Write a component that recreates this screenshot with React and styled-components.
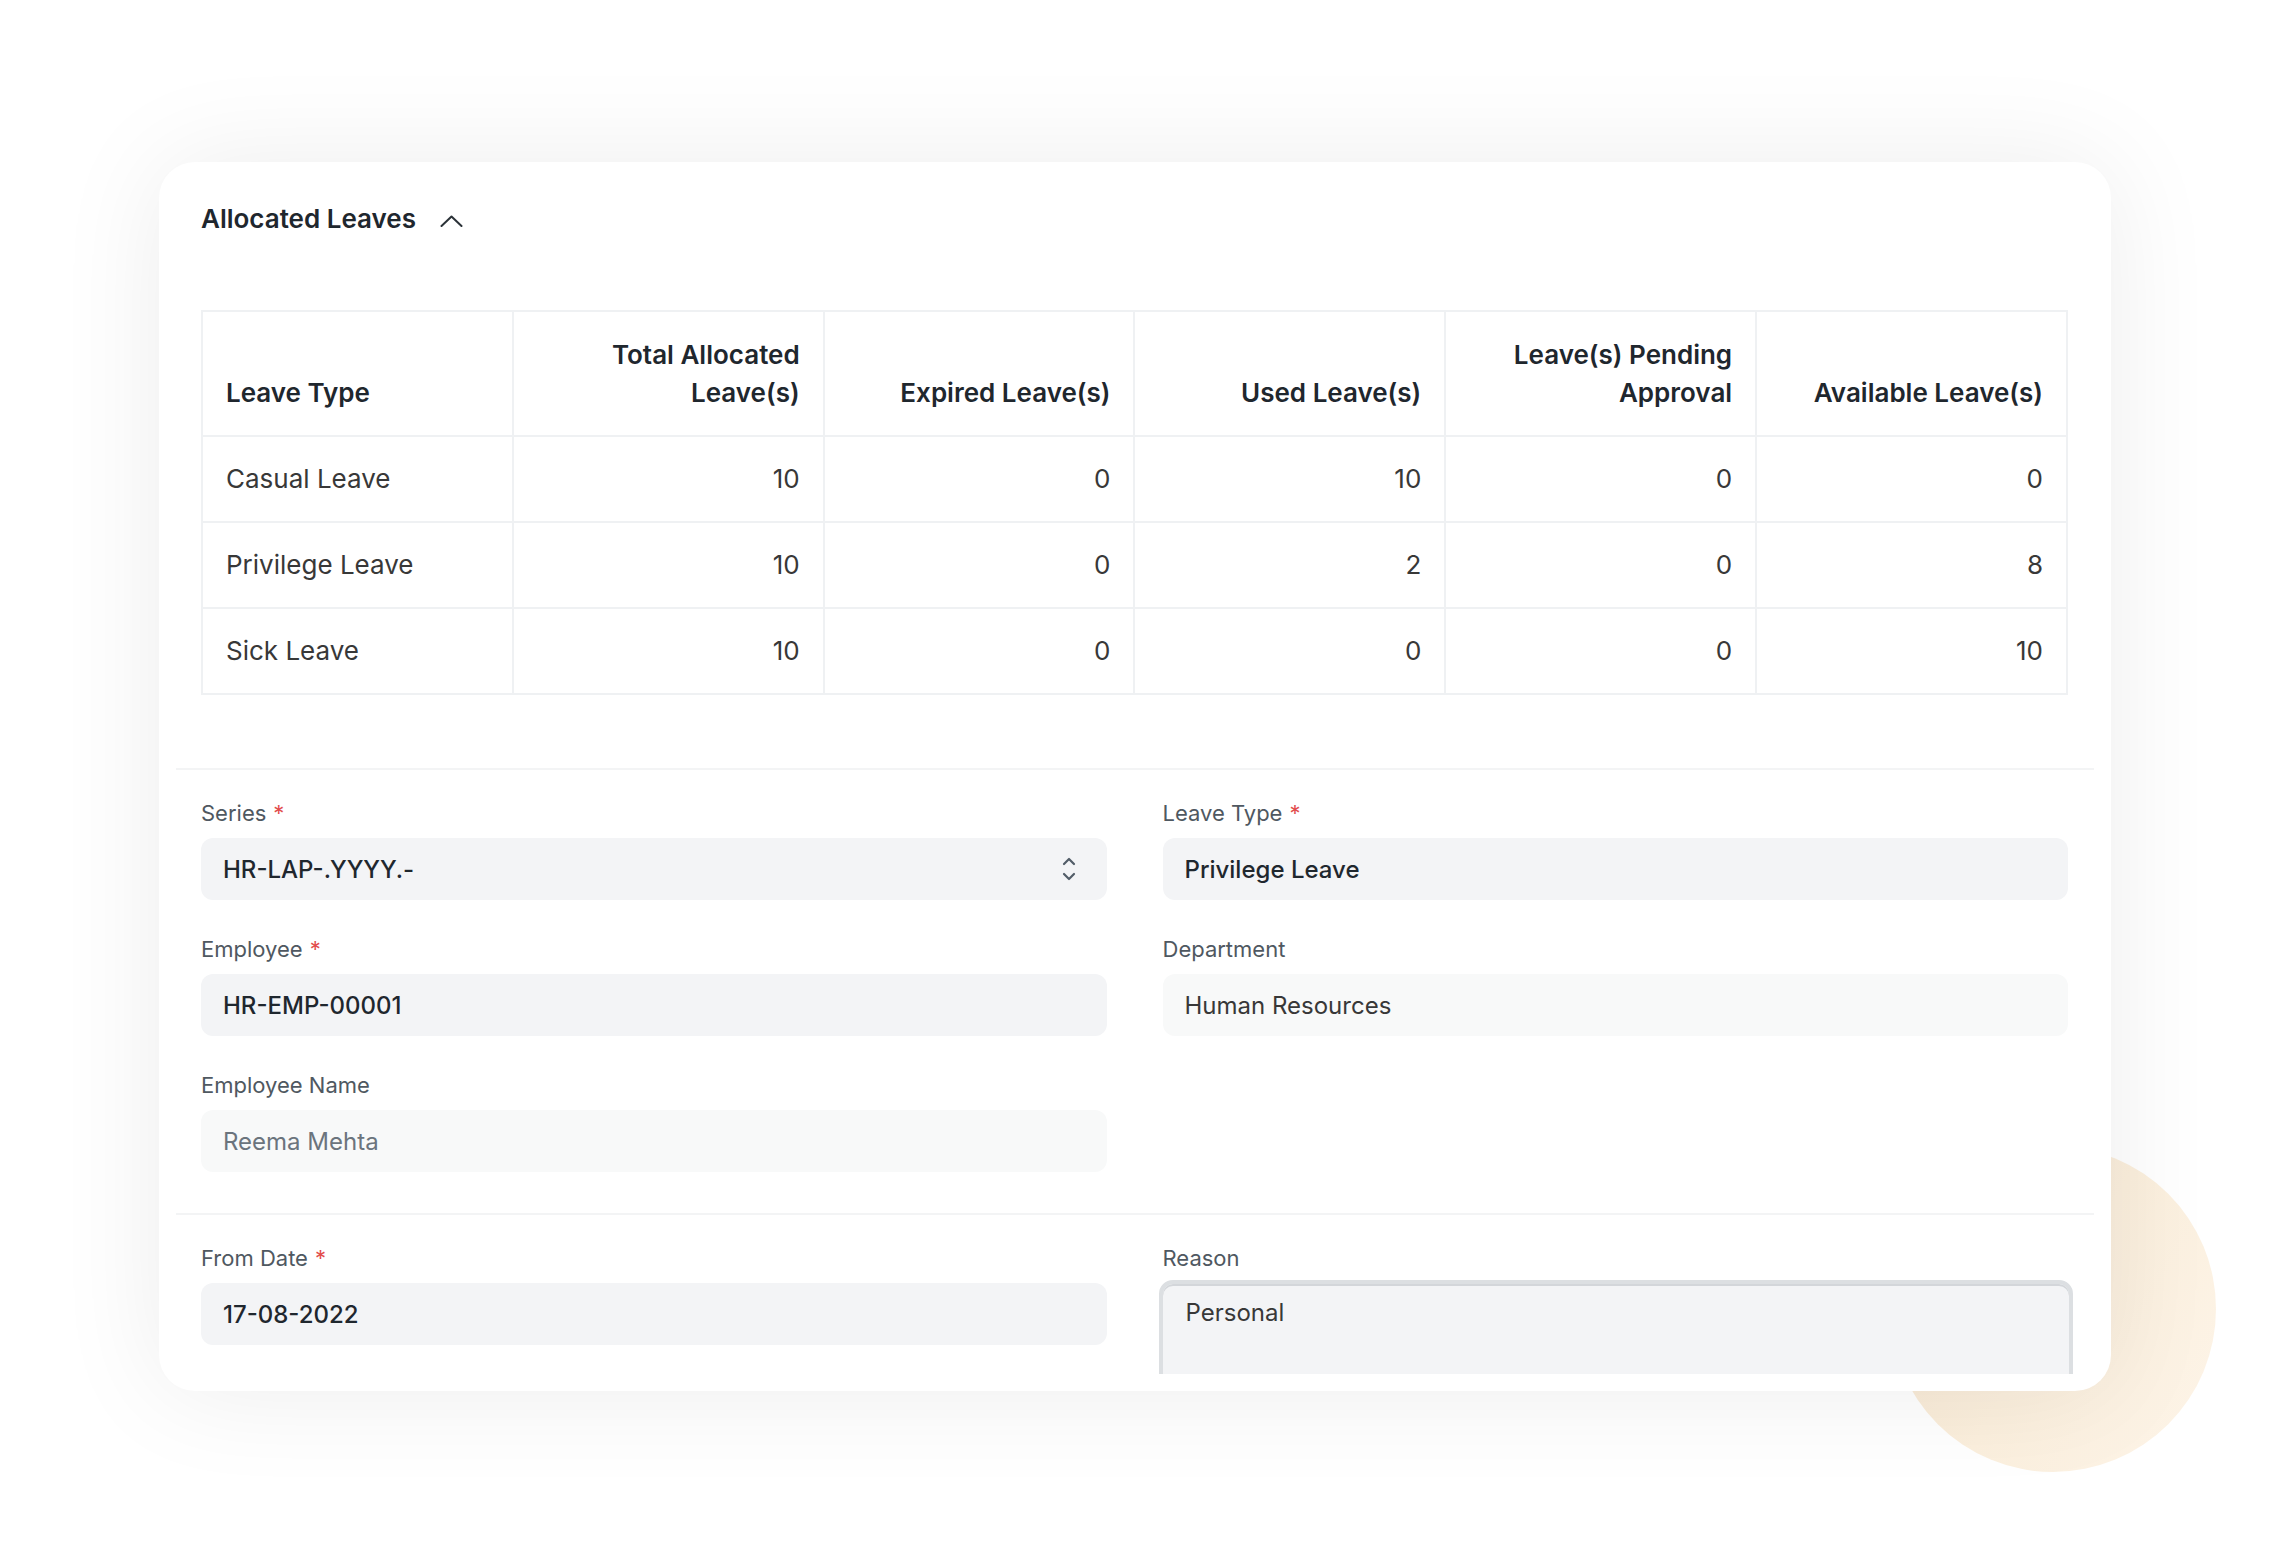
import React from "react";
import styled, { createGlobalStyle } from "styled-components";

const GlobalStyle = createGlobalStyle`
  * {
    box-sizing: border-box;
  }
  html,
  body {
    margin: 0;
    padding: 0;
    background: #ffffff;
  }
  body {
    font-family: Inter, "Noto Sans", sans-serif;
    color: #1f272e;
    -webkit-font-smoothing: antialiased;
  }
`;

const Page = styled.main`
  width: 2272px;
  height: 1550px;
  display: flex;
  justify-content: center;
  align-items: flex-start;
  padding-top: 162px;
  overflow: hidden;
`;

const Stage = styled.div`
  position: relative;
  width: 1952px;
  margin-left: -2px;
`;

/* peach blob peeking out behind the bottom-right corner of the card */
const Glow = styled.div`
  position: absolute;
  right: -105px;
  bottom: -81px;
  width: 326px;
  height: 326px;
  border-radius: 50%;
  background: linear-gradient(120deg, #f6e6cf 0%, #fbefdd 50%, #fdf4e8 100%);
`;

const Card = styled.section`
  position: relative;
  z-index: 1;
  height: 1229px;
  padding: 17px;
  background: #ffffff;
  border-radius: 36px;
  box-shadow: 0 0 110px rgba(0, 0, 0, 0.075);
`;

const Inner = styled.div`
  height: 100%;
  overflow: hidden;
`;

const LeavesSection = styled.div`
  padding: 25px 26px 73px 25px;
`;

const FormSection = styled.div`
  padding: 30px 26px ${(p) => (p.$last ? "38px" : "41px")} 25px;
  border-top: 2px solid #f3f4f5;
`;

const SectionHead = styled.div`
  display: flex;
  align-items: center;
  gap: 24px;
`;

const Title = styled.h3`
  margin: 0;
  font-size: 26px;
  line-height: 30px;
  font-weight: 600;
  color: #1f272e;
`;

const Chevron = styled.svg`
  margin-top: 3px;
  color: #2b3238;
`;

const Table = styled.table`
  width: 100%;
  margin-top: 76px;
  border-collapse: collapse;
  table-layout: fixed;
`;

const Th = styled.th`
  padding: 24px 23px 23px;
  border: 2px solid #eff1f3;
  font-size: 26px;
  line-height: 38px;
  font-weight: 600;
  color: #1f272e;
  text-align: ${(p) => (p.$left ? "left" : "right")};
  vertical-align: bottom;
`;

const Td = styled.td`
  height: 86px;
  padding: 0 23px;
  border: 2px solid #eff1f3;
  font-size: 26px;
  line-height: 32px;
  font-weight: 400;
  color: #383838;
  text-align: ${(p) => (p.$left ? "left" : "right")};
  vertical-align: middle;
`;

const FieldGrid = styled.div`
  display: grid;
  grid-template-columns: 1fr 1fr;
  column-gap: 56px;
  row-gap: 36px;
`;

const Field = styled.div`
  display: flex;
  flex-direction: column;
  gap: 12px;
  min-width: 0;
`;

const Label = styled.label`
  font-size: 22px;
  line-height: 26px;
  color: #4f5861;
`;

const Required = styled.span`
  margin-left: 7px;
  color: #e24c4c;
`;

const Control = styled.div`
  height: 62px;
  padding: 0 22px;
  display: flex;
  align-items: center;
  justify-content: space-between;
  border-radius: 12px;
  background: ${(p) => (p.$readOnly ? "#f8f9f9" : "#f3f4f6")};
  font-size: 24px;
  font-weight: ${(p) => (p.$readOnly ? 400 : 500)};
  color: ${(p) => (p.$muted ? "#6b747d" : p.$readOnly ? "#383838" : "#1f272e")};
`;

const SelectIcon = styled.svg`
  margin-right: 9px;
  color: #525d68;
`;

const TextArea = styled.div`
  height: 220px;
  margin: -3px -5px 0 -4px;
  padding: 14px 23px;
  border: 4px solid #dcdfe2;
  border-radius: 14px;
  background: #f3f4f6;
  box-shadow: inset 0 2px 0 #d3d6da;
  font-size: 24px;
  line-height: 30px;
  color: #383838;
`;

const leaves = [
  { type: "Casual Leave", total: 10, expired: 0, used: 10, pending: 0, available: 0 },
  { type: "Privilege Leave", total: 10, expired: 0, used: 2, pending: 0, available: 8 },
  { type: "Sick Leave", total: 10, expired: 0, used: 0, pending: 0, available: 10 },
];

const ChevronUp = () => (
  <Chevron width="23" height="12" viewBox="0 0 23 12" fill="none">
    <path d="M1.5 11 L11.5 1.5 L21.5 11" stroke="currentColor" strokeWidth="2" strokeLinecap="round" strokeLinejoin="round" />
  </Chevron>
);

const UpDown = () => (
  <SelectIcon width="14" height="24" viewBox="0 0 14 24" fill="none">
    <path d="M2 7 L7 2 L12 7" stroke="currentColor" strokeWidth="2.2" strokeLinecap="round" strokeLinejoin="round" />
    <path d="M2 17 L7 22 L12 17" stroke="currentColor" strokeWidth="2.2" strokeLinecap="round" strokeLinejoin="round" />
  </SelectIcon>
);

const FormField = ({ label, required, children }) => (
  <Field>
    <Label>
      {label}
      {required && <Required>*</Required>}
    </Label>
    {children}
  </Field>
);

export default function App() {
  return (
    <>
      <GlobalStyle />
      <Page>
        <Stage>
          <Glow />
          <Card>
            <Inner>
              <LeavesSection>
                <SectionHead>
                  <Title>Allocated Leaves</Title>
                  <ChevronUp />
                </SectionHead>
                <Table>
                  <thead>
                    <tr>
                      <Th $left>Leave Type</Th>
                      <Th>Total Allocated Leave(s)</Th>
                      <Th>Expired Leave(s)</Th>
                      <Th>Used Leave(s)</Th>
                      <Th>Leave(s) Pending Approval</Th>
                      <Th>Available Leave(s)</Th>
                    </tr>
                  </thead>
                  <tbody>
                    {leaves.map((row) => (
                      <tr key={row.type}>
                        <Td $left>{row.type}</Td>
                        <Td>{row.total}</Td>
                        <Td>{row.expired}</Td>
                        <Td>{row.used}</Td>
                        <Td>{row.pending}</Td>
                        <Td>{row.available}</Td>
                      </tr>
                    ))}
                  </tbody>
                </Table>
              </LeavesSection>

              <FormSection>
                <FieldGrid>
                  <FormField label="Series" required>
                    <Control>
                      HR-LAP-.YYYY.-
                      <UpDown />
                    </Control>
                  </FormField>
                  <FormField label="Leave Type" required>
                    <Control>Privilege Leave</Control>
                  </FormField>
                  <FormField label="Employee" required>
                    <Control>HR-EMP-00001</Control>
                  </FormField>
                  <FormField label="Department">
                    <Control $readOnly>Human Resources</Control>
                  </FormField>
                  <FormField label="Employee Name">
                    <Control $readOnly $muted>
                      Reema Mehta
                    </Control>
                  </FormField>
                </FieldGrid>
              </FormSection>

              <FormSection $last>
                <FieldGrid>
                  <FormField label="From Date" required>
                    <Control>17-08-2022</Control>
                  </FormField>
                  <FormField label="Reason">
                    <TextArea>Personal</TextArea>
                  </FormField>
                </FieldGrid>
              </FormSection>
            </Inner>
          </Card>
        </Stage>
      </Page>
    </>
  );
}
